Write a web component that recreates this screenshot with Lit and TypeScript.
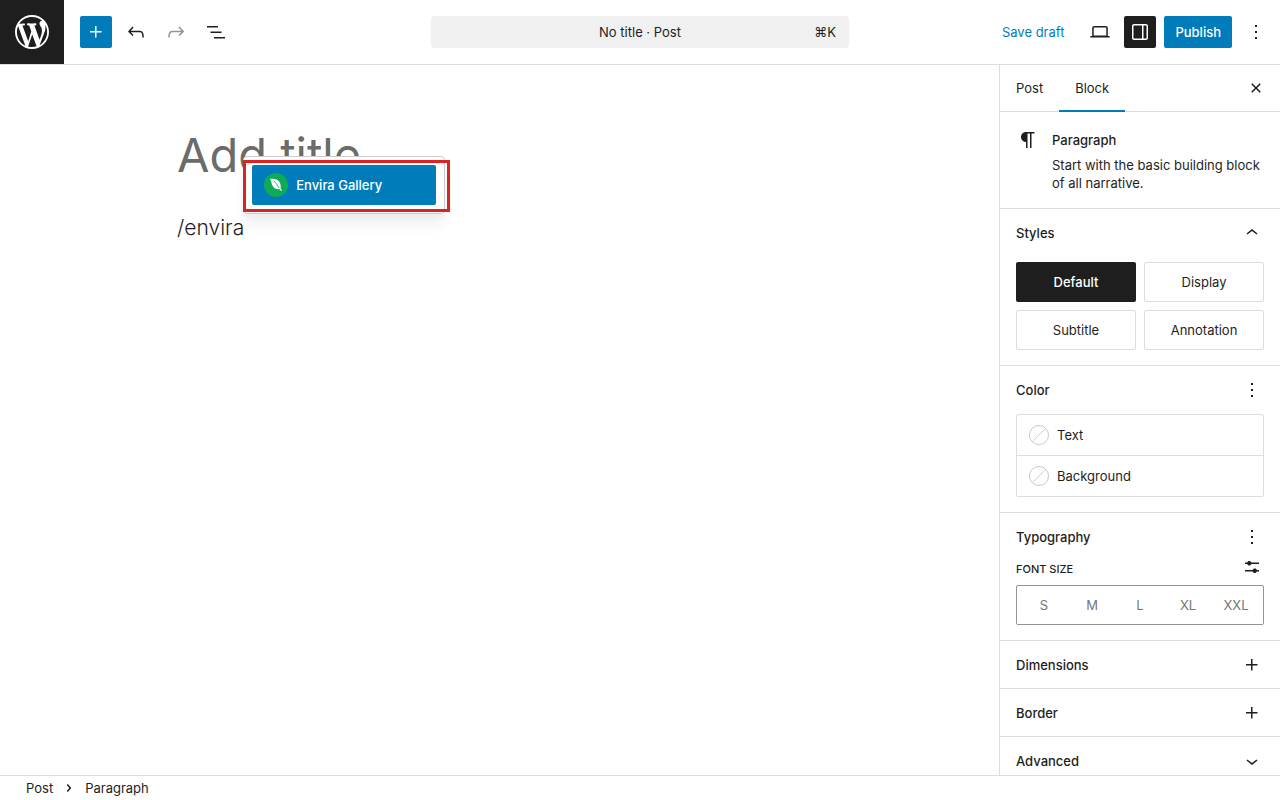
import { LitElement, html, css, svg } from "lit";
import { customElement, property, state } from "lit/decorators.js";
import { classMap } from "lit/directives/class-map.js";

const ICONS: Record<string, string> = {
  plus: "M11 12.5V17.5H12.5V12.5H17.5V11H12.5V6H11V11H6V12.5H11Z",
  undo: "M18.3 11.7c-.6-.6-1.4-.9-2.3-.9H6.7l2.9-3.3-1.1-1-4.5 5L8.5 16l1-1-2.7-2.7H16c.5 0 .9.2 1.3.5 1 1 1 3.4 1 4.5v.3h1.5v-.2c0-1.5 0-4.3-1.5-5.7z",
  redo: "M15.6 6.5l-1.1 1 2.9 3.3H8c-.9 0-1.7.3-2.3.9-1.4 1.5-1.4 4.2-1.4 5.6v.2h1.5v-.3c0-1.1 0-3.5 1-4.5.3-.3.7-.5 1.3-.5h9.2L14.5 15l1.1 1.1 4.6-4.6-4.6-5z",
  listView: "M3 6h11v1.5H3V6Zm3.5 5.5h11V13h-11v-1.5ZM21 17H10v1.5h11V17Z",
  desktop: "M20.5 16h-.7V8c0-1.1-.9-2-2-2H6.2c-1.1 0-2 .9-2 2v8h-.7c-.8 0-1.5.7-1.5 1.5h20c0-.8-.7-1.5-1.5-1.5zM5.7 8c0-.3.2-.5.5-.5h11.6c.3 0 .5.2.5.5v7.6H5.7V8z",
  drawer: "M18 4H6c-1.1 0-2 .9-2 2v12c0 1.1.9 2 2 2h12c1.1 0 2-.9 2-2V6c0-1.1-.9-2-2-2zm-4 14.5H6c-.3 0-.5-.2-.5-.5V6c0-.3.2-.5.5-.5h8v13zm4.5-.5c0 .3-.2.5-.5.5h-2.5v-13H18c.3 0 .5.2.5.5v12z",
  more: "M13 19h-2v-2h2v2zm0-6h-2v-2h2v2zm0-6h-2V5h2v2z",
  close: "M12 13.06l3.712 3.713 1.061-1.06L13.061 12l3.712-3.712-1.06-1.06L12 10.938 8.288 7.227l-1.061 1.06L10.939 12l-3.712 3.712 1.06 1.061L12 13.061z",
  paragraph: "m9.99609 14v-.2251l.00391.0001v6.225h1.5v-14.5h2.5v14.5h1.5v-14.5h3v-1.5h-8.50391c-2.76142 0-5 2.23858-5 5 0 2.7614 2.23858 5 5 5z",
  chevronUp: "M6.5 12.4L12 8l5.5 4.4-.9 1.2L12 10l-4.5 3.6-1-1.2z",
  chevronDown: "M17.5 11.6L12 16l-5.5-4.4.9-1.2L12 14l4.5-3.6 1 1.2z",
  chevronRight: "M10.8622 8.04053L14.2805 12.0286L10.8622 16.0167L9.72327 15.0405L12.3049 12.0286L9.72327 9.01672L10.8622 8.04053Z",
  settings: "m19 7.5h-7.628c-.3089-.87389-1.1423-1.5-2.122-1.5-.97966 0-1.81309.62611-2.12197 1.5h-2.12803v1.5h2.12803c.30888.87389 1.14231 1.5 2.12197 1.5.9797 0 1.8131-.62611 2.122-1.5h7.628zm0 7.5h-2.128c-.3089-.8739-1.1423-1.5-2.122-1.5s-1.8131.6261-2.122 1.5h-7.628v1.5h7.628c.3089.8739 1.1423 1.5 2.122 1.5s1.8131-.6261 2.122-1.5h2.128z",
};

@customElement("wp-icon")
class WpIcon extends LitElement {
  @property() name = "";
  static styles = css`
    :host { display: block; width: 24px; height: 24px; flex: none; }
    svg { display: block; fill: currentColor; }
  `;
  render() {
    return html`<svg width="24" height="24" viewBox="0 0 24 24" aria-hidden="true">${svg`<path d=${ICONS[this.name]}></path>`}</svg>`;
  }
}

@customElement("app-root")
class AppRoot extends LitElement {
  @state() private style_ = "Default";

  static styles = css`
    :host {
      display: grid;
      grid-template-rows: auto minmax(0, 1fr) auto;
      height: 100vh;
      overflow: hidden;
      background: #fff;
      color: #1e1e1e;
      font: 400 13px/18px Inter, "Liberation Sans", sans-serif;
    }
    * { box-sizing: border-box; }
    button, input { font: inherit; color: inherit; }
    button { margin: 0; padding: 0; border: 0; background: none; cursor: pointer; }
    h1, h2, h3, p, ul, ol, fieldset, legend { margin: 0; padding: 0; border: 0; font: inherit; list-style: none; }

    .header {
      display: grid;
      grid-template-columns: minmax(0, 1fr) minmax(0, 418px) minmax(0, 1fr);
      align-items: center;
      height: 65px;
      border-bottom: 1px solid #ddd;
    }
    .start { display: flex; align-items: center; gap: 8px; }
    .logo {
      display: grid;
      place-items: center;
      width: 64px;
      height: 64px;
      margin-right: 8px;
      background: #1e1e1e;
      color: #fff;
    }
    .logo svg { display: block; fill: currentColor; }
    .tool { display: grid; place-items: center; width: 32px; height: 32px; border-radius: 2px; }
    .tool.primary { background: #007cba; color: #fff; }
    .tool.dark { background: #1e1e1e; color: #fff; }
    .tool:disabled { color: #949494; }
    .command {
      display: grid;
      grid-template-columns: 1fr auto 1fr;
      align-items: center;
      height: 32px;
      padding: 0 13px;
      border-radius: 4px;
      background: #f0f0f0;
    }
    .shortcut { grid-column: 3; text-align: right; }
    .doc { grid-column: 2; }
    .end { display: flex; align-items: center; justify-content: flex-end; gap: 8px; padding-right: 8px; }
    .draft { padding: 0 12px; height: 32px; color: #007cba; }
    .publish { height: 32px; padding: 0 11px; border-radius: 2px; background: #007cba; color: #fff; font-weight: 500; }

    .main { display: grid; grid-template-columns: minmax(0, 1fr) 281px; min-height: 0; }
    .canvas { padding: 59px 24px; overflow: hidden; }
    .content { display: grid; gap: 27px; max-width: 645px; margin: 0 auto; }
    .title {
      width: 100%;
      height: 62px;
      padding: 0;
      border: 0;
      outline: 0;
      background: none;
      font-size: 47px;
      line-height: 62px;
    }
    .title::placeholder { color: #6b6b6b; opacity: 1; }
    .block { display: flex; font-size: 21px; line-height: 30px; font-weight: 300; }
    .caret { position: relative; font-size: 13px; line-height: 18px; font-weight: 400; }
    .popover {
      position: absolute;
      left: -1px;
      bottom: 29px;
      width: 202px;
      padding: 8px;
      border: 1px solid #ccc;
      border-radius: 4px;
      background: #fff;
      box-shadow: 0 4px 5px rgba(0,0,0,.03), 0 12px 12px rgba(0,0,0,.03), 0 16px 16px rgba(0,0,0,.02);
    }
    .option {
      display: flex;
      align-items: center;
      gap: 8px;
      width: 184px;
      height: 40px;
      padding: 0 12px;
      border-radius: 2px;
      background: #007cba;
      color: #fff;
      font-weight: 500;
    }
    .highlight {
      position: absolute;
      left: -1px;
      bottom: 31px;
      width: 207px;
      height: 52px;
      border: 3px solid #dc2323;
      pointer-events: none;
    }

    .sidebar { border-left: 1px solid #ddd; overflow: hidden; }
    .tabs { display: flex; height: 47px; border-bottom: 1px solid #ddd; }
    .tab { height: 47px; padding: 0 16px 2px; }
    .tab.active { box-shadow: inset 0 -2px #007cba; }
    .tabs .tool { margin: 7px 8px 0 auto; }
    .card { display: flex; gap: 12px; padding: 16px; border-bottom: 1px solid #ddd; }
    .card-text { display: grid; gap: 7px; padding-top: 3px; }
    .strong { font-weight: 500; }
    .panel { padding: 0 16px 15px; border-bottom: 1px solid #ddd; }
    .panel.closed { padding-bottom: 0; }
    .panel-head { display: flex; align-items: center; justify-content: space-between; height: 48px; font-weight: 500; }
    .panel.closed .panel-head { height: 47px; }
    .panel-head button { display: block; }
    .variations { display: grid; grid-template-columns: 1fr 1fr; gap: 8px; padding-top: 5px; }
    .variation { height: 40px; border-radius: 2px; box-shadow: inset 0 0 0 1px #ddd; }
    .variation.active { background: #1e1e1e; color: #fff; box-shadow: none; font-weight: 500; }
    .colors { border: 1px solid #ddd; border-radius: 2px; }
    .color { display: flex; align-items: center; gap: 8px; width: 100%; height: 40px; padding: 0 12px; }
    .colors li + li { border-top: 1px solid #ddd; }
    .size-head { display: flex; align-items: center; justify-content: space-between; height: 24px; font-size: 11px; font-weight: 500; }
    .size-head h3 { padding-top: 4px; }
    .typo .panel-head { height: 42px; padding-top: 6px; }
    .typo .size-head { margin-bottom: 6px; }
    .sizes { display: grid; grid-template-columns: repeat(5, 1fr); height: 40px; padding: 0 3px; border: 1px solid #949494; border-radius: 2px; color: #757575; }

    .footer { display: flex; align-items: center; height: 25px; padding: 0 26px; border-top: 1px solid #ddd; }
    .footer ol, .footer li { display: flex; align-items: center; gap: 4px; }
  `;

  private closedPanel(label: string, icon: string) {
    return html`<section class="panel closed">
      <div class="panel-head"><h2>${label}</h2><button aria-label=${"Open " + label}><wp-icon name=${icon}></wp-icon></button></div>
    </section>`;
  }

  render() {
    return html`
      <header class="header">
        <div class="start">
          <a class="logo" href="#" aria-label="View Posts">
            <svg width="34" height="34" viewBox="0 0 20 20" aria-hidden="true"><path d="M20 10c0-5.51-4.49-10-10-10C4.48 0 0 4.49 0 10c0 5.52 4.48 10 10 10 5.51 0 10-4.48 10-10zM7.78 15.37L4.37 6.22c.55-.02 1.17-.08 1.17-.08.5-.06.44-1.13-.06-1.11 0 0-1.45.11-2.37.11-.18 0-.37 0-.58-.01C4.12 2.69 6.87 1.11 10 1.11c2.33 0 4.45.87 6.05 2.34-.68-.11-1.65.39-1.65 1.58 0 .74.45 1.36.9 2.1.35.61.55 1.36.55 2.46 0 1.49-1.4 5-1.4 5l-3.03-8.37c.54-.02.82-.17.82-.17.5-.05.44-1.25-.06-1.22 0 0-1.44.12-2.38.12-.87 0-2.33-.12-2.33-.12-.5-.03-.56 1.2-.06 1.22l.92.08 1.26 3.41zM17.41 10c.24-.64.74-1.87.43-4.25.7 1.29 1.05 2.71 1.05 4.25 0 3.29-1.73 6.24-4.4 7.78.97-2.59 1.94-5.2 2.92-7.78zM6.1 18.09C3.12 16.65 1.11 13.53 1.11 10c0-1.3.23-2.48.72-3.59C3.25 10.3 4.67 14.2 6.1 18.09zm4.03-6.63l2.58 6.98c-.86.29-1.76.45-2.71.45-.79 0-1.57-.11-2.29-.33.81-2.38 1.62-4.74 2.42-7.1z"></path></svg>
          </a>
          <button class="tool primary" aria-label="Toggle block inserter"><wp-icon name="plus"></wp-icon></button>
          <button class="tool" aria-label="Undo"><wp-icon name="undo"></wp-icon></button>
          <button class="tool" aria-label="Redo" disabled><wp-icon name="redo"></wp-icon></button>
          <button class="tool" aria-label="Document Overview"><wp-icon name="listView"></wp-icon></button>
        </div>
        <button class="command"><span class="doc">No title · Post</span><span class="shortcut">⌘K</span></button>
        <div class="end">
          <button class="draft">Save draft</button>
          <button class="tool" aria-label="View"><wp-icon name="desktop"></wp-icon></button>
          <button class="tool dark" aria-label="Settings"><wp-icon name="drawer"></wp-icon></button>
          <button class="publish">Publish</button>
          <button class="tool" aria-label="Options"><wp-icon name="more"></wp-icon></button>
        </div>
      </header>

      <div class="main">
        <main class="canvas">
          <div class="content">
            <input class="title" aria-label="Add title" placeholder="Add title" />
            <div class="block">
              <p>/envira</p>
              <div class="caret">
                <div class="popover" role="listbox" aria-label="Blocks">
                  <button class="option" role="option" aria-selected="true">
                    <svg width="24" height="24" viewBox="0 0 24 24" aria-hidden="true">
                      <circle cx="12" cy="12" r="12" fill="#0bab57"></circle>
                      <path fill="#fff" d="M6 6c3.500-.6 7.500-.2 9.600 3 1.300 2.100 1.200 4.600 1 6.400l1.500 2.100-.8.400-1.700-1.700C12 16.500 8.900 14.800 7.900 11.500 7.300 9.500 7.100 7.500 6 6z"></path>
                      <path fill="none" stroke="#0bab57" stroke-width=".9" d="M9.600 7.800c2 1.600 3.900 4 5.200 7"></path>
                    </svg>
                    <span>Envira Gallery</span>
                  </button>
                </div>
                <div class="highlight"></div>
              </div>
            </div>
          </div>
        </main>

        <aside class="sidebar">
          <div class="tabs" role="tablist">
            <button class="tab" role="tab" aria-selected="false">Post</button>
            <button class="tab active" role="tab" aria-selected="true">Block</button>
            <button class="tool" aria-label="Close Settings"><wp-icon name="close"></wp-icon></button>
          </div>
          <div class="card">
            <wp-icon name="paragraph"></wp-icon>
            <div class="card-text">
              <h2 class="strong">Paragraph</h2>
              <p>Start with the basic building block of all narrative.</p>
            </div>
          </div>
          <section class="panel">
            <div class="panel-head"><h2>Styles</h2><button aria-label="Collapse Styles"><wp-icon name="chevronUp"></wp-icon></button></div>
            <div class="variations">
              ${["Default", "Display", "Subtitle", "Annotation"].map(
                (s) => html`<button class=${classMap({ variation: true, active: s === this.style_ })} @click=${() => (this.style_ = s)}>${s}</button>`
              )}
            </div>
          </section>
          <section class="panel">
            <div class="panel-head"><h2>Color</h2><button aria-label="Color options"><wp-icon name="more"></wp-icon></button></div>
            <ul class="colors">
              ${["Text", "Background"].map(
                (c) => html`<li><button class="color">
                  <svg width="20" height="20" viewBox="0 0 20 20" fill="none" stroke="#c8c8c8" aria-hidden="true"><circle cx="10" cy="10" r="9.5"></circle><path d="M3.300 16.700L16.700 3.300" stroke-width=".8"></path></svg>
                  <span>${c}</span></button></li>`
              )}
            </ul>
          </section>
          <section class="panel typo">
            <div class="panel-head"><h2>Typography</h2><button aria-label="Typography options"><wp-icon name="more"></wp-icon></button></div>
            <div class="size-head"><h3>FONT SIZE</h3><button aria-label="Set custom size"><wp-icon name="settings"></wp-icon></button></div>
            <div class="sizes" role="group" aria-label="Font size">
              ${["S", "M", "L", "XL", "XXL"].map((s) => html`<button>${s}</button>`)}
            </div>
          </section>
          ${this.closedPanel("Dimensions", "plus")}
          ${this.closedPanel("Border", "plus")}
          ${this.closedPanel("Advanced", "chevronDown")}
        </aside>
      </div>

      <footer class="footer">
        <ol aria-label="Block breadcrumb">
          <li><button>Post</button><wp-icon name="chevronRight"></wp-icon></li>
          <li><button>Paragraph</button></li>
        </ol>
      </footer>
    `;
  }
}
